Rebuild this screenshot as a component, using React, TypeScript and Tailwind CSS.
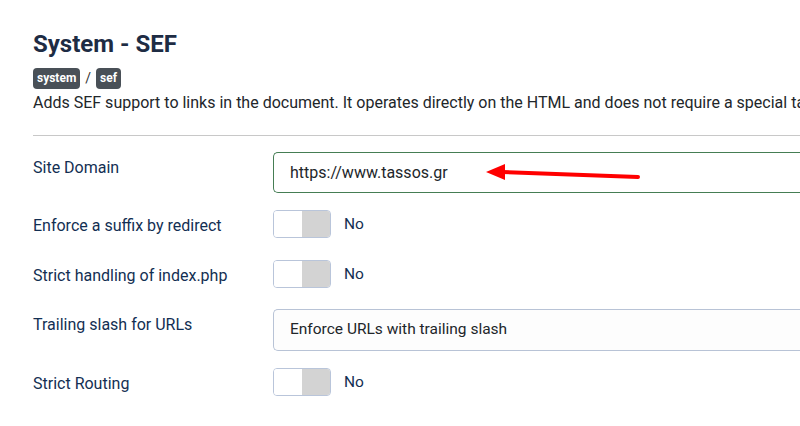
import React from "react";

function Toggle() {
  return (
    <div className="flex items-center">
      <div className="flex h-[28px] w-[58px] overflow-hidden rounded-[4px] border border-[#b9c5da] bg-white">
        <div className="w-1/2 bg-white" />
        <div className="w-1/2 bg-[#d3d3d3]" />
      </div>
      <span className="ml-[13px] text-[15.5px] leading-[22px] text-[#132f53]">No</span>
    </div>
  );
}

function Row({ label, children, mt }: { label: string; children: React.ReactNode; mt: string }) {
  return (
    <div className={`flex ${mt}`}>
      <div className="w-[240px] shrink-0 pt-[5px] text-[16px] leading-[22px] text-[#132f53]">{label}</div>
      <div className="min-w-0 flex-1">{children}</div>
    </div>
  );
}

export default function App() {
  return (
    <div
      className="h-[426px] w-[800px] overflow-hidden bg-white pl-[33px]"
      style={{ fontFamily: "Roboto, 'Liberation Sans', sans-serif" }}
    >
      <h1 className="pt-[29px] text-[24px] font-bold leading-[30px] text-[#1e2c44]">System - SEF</h1>
      <div className="mt-[9px] flex items-center text-[12px]">
        <span className="rounded-[4px] bg-[#495057] px-[4px] text-[12px] font-bold leading-[21px] text-white">system</span>
        <span className="mx-[5px] text-[#333] text-[14px]">/</span>
        <span className="rounded-[4px] bg-[#495057] px-[4px] text-[12px] font-bold leading-[21px] text-white">sef</span>
      </div>
      <p className="mt-[3px] whitespace-nowrap text-[16px] leading-[22px] text-[#22262a]">
        Adds SEF support to links in the document. It operates directly on the HTML and does not require a special tag.
      </p>
      <div className="mt-[21px] h-px bg-[#c8c8c8]" />

      <Row label="Site Domain" mt="mt-[16px]">
        <div className="relative -mr-[10px] flex h-[41px] items-center rounded-l-[5px] border border-r-0 border-[#457d54] bg-white pl-[16px] text-[16px] text-[#22262a]">
          https://www.tassos.gr
          <svg className="absolute left-[210px] top-[11px]" width="160" height="22" viewBox="0 0 160 22">
            <line x1="18" y1="8" x2="154" y2="13" stroke="#ff0000" strokeWidth="4" strokeLinecap="round" />
            <polygon points="2,8 21,0 21,16" fill="#ff0000" />
          </svg>
        </div>
      </Row>

      <Row label="Enforce a suffix by redirect" mt="mt-[17px]">
        <Toggle />
      </Row>

      <Row label="Strict handling of index.php" mt="mt-[22px]">
        <Toggle />
      </Row>

      <Row label="Trailing slash for URLs" mt="mt-[21px]">
        <div className="-mr-[10px] flex h-[42px] items-center rounded-l-[5px] border border-r-0 border-[#b8c3d6] bg-[#fdfdfd] pl-[16px] text-[15.5px] text-[#22262a]">
          Enforce URLs with trailing slash
        </div>
      </Row>

      <Row label="Strict Routing" mt="mt-[17px]">
        <Toggle />
      </Row>
    </div>
  );
}
